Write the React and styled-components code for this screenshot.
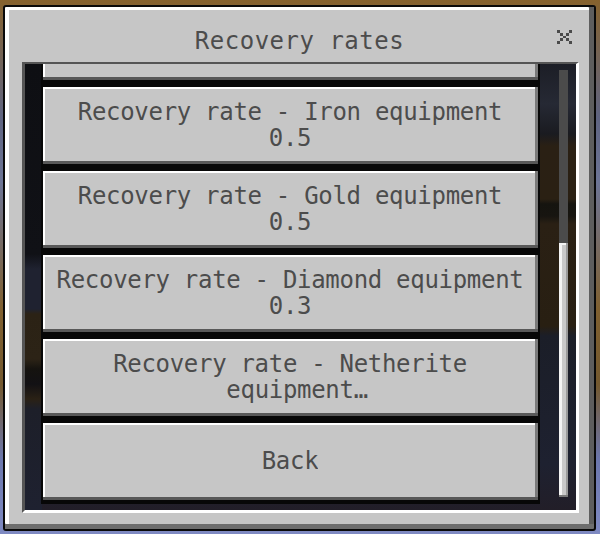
import React, { useLayoutEffect, useRef } from "react";
import styled, { createGlobalStyle } from "styled-components";

const GlobalStyle = createGlobalStyle`
  html, body {
    margin: 0;
    padding: 0;
  }
  body {
    width: 600px;
    height: 534px;
    overflow: hidden;
    background: linear-gradient(
      180deg,
      #86622e 0%,
      #5f6481 22%,
      #6d7596 34%,
      #806030 58%,
      #74592f 72%,
      #6c77ad 86%,
      #7f8ac2 100%
    );
    font-family: "DejaVu Sans Mono", "Liberation Mono", monospace;
  }
`;

const Stage = styled.div`
  padding: 5px 4px 3px 3px;
`;

const Dialog = styled.section`
  box-sizing: border-box;
  width: 593px;
  height: 526px;
  display: flex;
  flex-direction: column;
  background: #c6c6c6;
  border: 2px solid #0a0a0a;
  border-radius: 3px;
  box-shadow:
    inset 0 -5px 0 #6e6e6e,
    inset -5px 0 0 #5e5e5e,
    inset 0 3px 0 #ffffff,
    inset 4px 0 0 #ffffff;
`;

const Header = styled.header`
  box-sizing: border-box;
  flex: none;
  height: 55px;
  padding-top: 21px;
  display: grid;
  grid-template-columns: 1fr auto 1fr;
  align-items: start;
`;

const Title = styled.h1`
  grid-column: 2;
  margin: 0;
  font: 400 24px/26px "DejaVu Sans Mono", "Liberation Mono", monospace;
  letter-spacing: 0.5px;
  color: #4c4c4c;
  white-space: nowrap;
`;

const CloseButton = styled.button`
  grid-column: 3;
  justify-self: end;
  margin: 2px 22px 0 0;
  padding: 0;
  border: 0;
  background: none;
  display: flex;
  cursor: pointer;
`;

const ScrollPanel = styled.div`
  flex: 1;
  min-height: 0;
  display: flex;
  margin: 0 15px 16px 17px;
  border-style: solid;
  border-width: 2px 3px 3px 3px;
  border-color: #555555 #ffffff #ffffff #555555;
  background:
    linear-gradient(
        180deg,
        #0e0f13 0px,
        #101116 190px,
        #1f2230 205px,
        #1f2230 245px,
        #2b2215 250px,
        #2c2316 295px,
        #15130f 305px,
        #121114 320px,
        #2a2115 335px,
        #1d1f29 345px,
        #1e2130 446px
      )
      0 0 / 17px 100% no-repeat,
    linear-gradient(
      180deg,
      #1c1e26 0px,
      #262934 40px,
      #1a1b20 70px,
      #2a2014 82px,
      #2a2013 135px,
      #15140f 140px,
      #171510 152px,
      #2a2014 160px,
      #281f12 262px,
      #1b1e28 272px,
      #1e2130 400px,
      #221e28 446px
    );
`;

const Viewport = styled.div`
  flex: 1;
  min-width: 0;
  overflow: hidden;
  padding-left: 16px;
`;

const OptionList = styled.div`
  display: flex;
  flex-direction: column;
  padding-bottom: 6px;
`;

const OptionButton = styled.button`
  box-sizing: border-box;
  flex: none;
  width: 100%;
  height: 84px;
  margin: 0;
  padding: 2px 11px 3px 10px;
  display: flex;
  align-items: center;
  justify-content: center;
  border-style: solid;
  border-color: #070707;
  border-width: 3px 2px 4px 2px;
  background: #c6c6c6;
  box-shadow:
    inset 0 -3px 0 #585858,
    inset -3px 0 0 #7a7a7a,
    inset 0 2px 0 #ffffff,
    inset 2px 0 0 #ffffff;
  font: 400 24px/26px "DejaVu Sans Mono", "Liberation Mono", monospace;
  letter-spacing: -0.3px;
  color: #4c4c4c;
  text-align: center;
  cursor: pointer;
`;

const Caption = styled.span`
  display: -webkit-box;
  -webkit-box-orient: vertical;
  -webkit-line-clamp: 2;
  overflow: hidden;
`;

const ScrollBar = styled.div`
  flex: none;
  width: 9px;
  margin: 6px 8px 13px 19px;
  display: flex;
  flex-direction: column;
  justify-content: flex-end;
  background: #4b4b4b;
`;

const Thumb = styled.div`
  flex: none;
  height: ${(p) => p.$size}px;
  background: #c9c9c9;
  box-shadow:
    inset 0 -2px 0 #7a7a7a,
    inset -2px 0 0 #9a9a9a,
    inset 0 2px 0 #f4f4f4,
    inset 3px 0 0 #f4f4f4;
`;

const options = [
  { label: "Recovery rate - Leather equipment", value: "0.8" },
  { label: "Recovery rate - Iron equipment", value: "0.5" },
  { label: "Recovery rate - Gold equipment", value: "0.5" },
  { label: "Recovery rate - Diamond equipment", value: "0.3" },
  { label: "Recovery rate - Netherite equipment", value: "0.2" },
];

function CloseIcon() {
  const cells = [
    [0, 0], [4, 0],
    [1, 1], [3, 1],
    [2, 2],
    [1, 3], [3, 3],
    [0, 4], [4, 4],
  ];
  return (
    <svg width="15" height="14" viewBox="0 0 5 5" preserveAspectRatio="none" shapeRendering="crispEdges">
      {cells.map(([x, y]) => (
        <rect key={`${x}-${y}`} x={x} y={y} width="1" height="1" fill="#4a4a4a" />
      ))}
    </svg>
  );
}

export default function App() {
  const viewportRef = useRef(null);

  // The list opens scrolled to its end, where the Back button sits.
  useLayoutEffect(() => {
    const el = viewportRef.current;
    if (el) el.scrollTop = el.scrollHeight;
  }, []);

  return (
    <>
      <GlobalStyle />
      <Stage>
        <Dialog>
          <Header>
            <Title>Recovery rates</Title>
            <CloseButton aria-label="Close">
              <CloseIcon />
            </CloseButton>
          </Header>
          <ScrollPanel>
            <Viewport ref={viewportRef}>
              <OptionList>
                {options.map((o) => (
                  <OptionButton key={o.label}>
                    <Caption>
                      {o.label}
                      <br />
                      {o.value}
                    </Caption>
                  </OptionButton>
                ))}
                <OptionButton>
                  <Caption>Back</Caption>
                </OptionButton>
              </OptionList>
            </Viewport>
            <ScrollBar>
              <Thumb $size={254} />
            </ScrollBar>
          </ScrollPanel>
        </Dialog>
      </Stage>
    </>
  );
}
